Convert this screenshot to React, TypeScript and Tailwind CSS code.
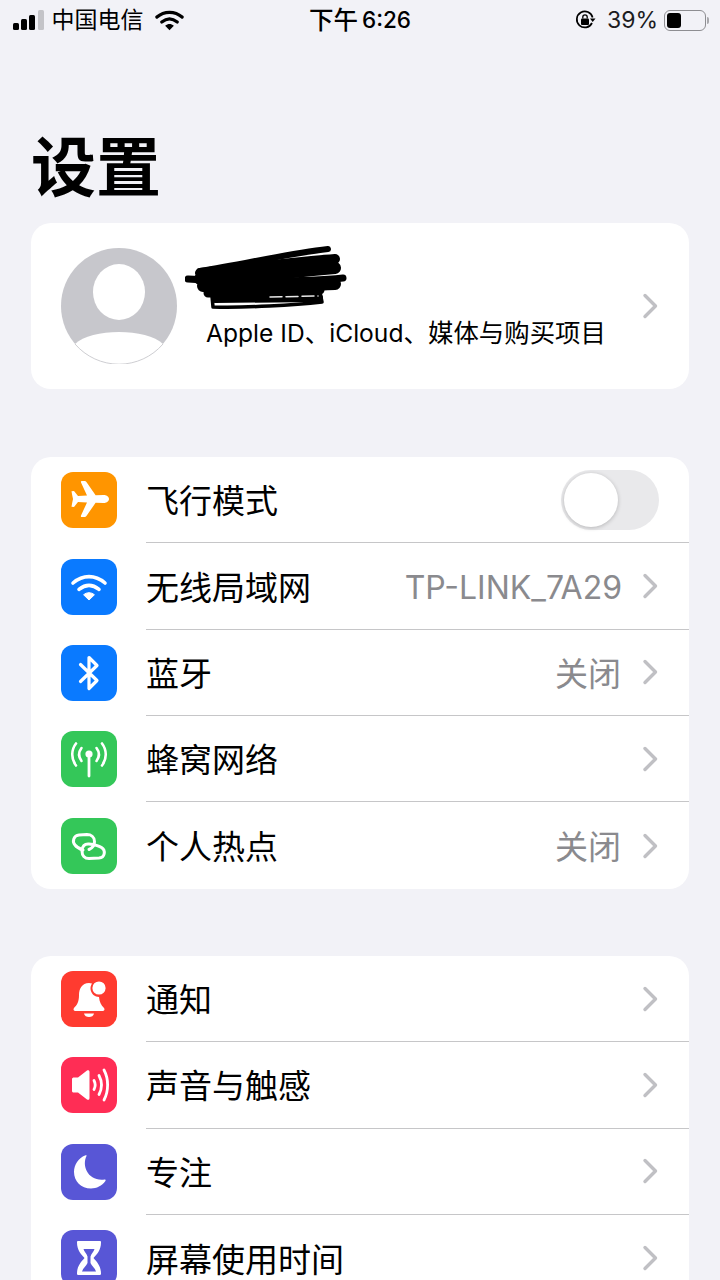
import React from "react";

const font = { fontFamily: '"Inter","Noto Sans CJK SC",sans-serif' };

function Chevron() {
  return (
    <svg width="16" height="26" viewBox="0 0 16 26" fill="none" className="shrink-0">
      <path d="M3 2.5 L13.5 13 L3 23.5" stroke="#c0c0c4" strokeWidth="3.4" strokeLinecap="round" strokeLinejoin="round" />
    </svg>
  );
}

function Plane() {
  return (
    <svg viewBox="0 0 56 56" className="w-14 h-14">
      <path fill="#fff" transform="translate(0 -1)" d="M10.5 20.2 L13 20 L17 25 L26 24.6 L20 11.5 C19.6 10.4 20.2 10 21 10 L23.5 10 C24.4 10 25 10.4 25.6 11.2 L34.6 24.3 L42.5 24 C46.5 24 48 26.4 48 28 C48 29.6 46.5 32 42.5 32 L34.6 31.7 L25.6 44.8 C25 45.6 24.4 46 23.5 46 L21 46 C20.2 46 19.6 45.6 20 44.5 L26 31.4 L17 31 L13 36 L10.5 35.8 C10.8 33 11.6 30.5 12 28 C11.6 25.5 10.8 23 10.5 20.2 Z" />
    </svg>
  );
}

function WifiIcon({ color = "#fff", w = 56 }: { color?: string; w?: number }) {
  return (
    <svg viewBox="0 0 56 56" width={w} height={w}>
      <path d="M12 24 C22 15.5 34 15.5 44 24" stroke={color} strokeWidth="3.6" fill="none" strokeLinecap="round" />
      <path d="M18 30.4 C24.5 25.2 31.5 25.2 38 30.4" stroke={color} strokeWidth="3.6" fill="none" strokeLinecap="round" />
      <path d="M22.6 35.8 C26 33 30 33 33.4 35.8 L28 41 Z" fill={color} stroke={color} strokeWidth="1" strokeLinejoin="round" />
    </svg>
  );
}

function Bluetooth() {
  return (
    <svg viewBox="0 0 56 56" className="w-14 h-14">
      <path d="M19.5 19.5 L36 35.5 L28 43.5 L28 12.5 L36 20.5 L19.5 36.5" stroke="#fff" strokeWidth="3.2" fill="none" strokeLinecap="round" strokeLinejoin="round" />
    </svg>
  );
}

function Antenna() {
  return (
    <svg viewBox="0 0 56 56" className="w-14 h-14">
      <circle cx="28" cy="23" r="3.6" fill="#fff" />
      <path d="M28 24 L28 45" stroke="#fff" strokeWidth="2.8" strokeLinecap="round" />
      <g stroke="#fff" strokeWidth="2.6" fill="none" strokeLinecap="round">
        <path d="M20.5 17 C17.5 21 17.5 26 20.5 30" />
        <path d="M35.5 17 C38.5 21 38.5 26 35.5 30" />
        <path d="M15 12.5 C10 19 10 28 15 34.5" />
        <path d="M41 12.5 C46 19 46 28 41 34.5" />
      </g>
    </svg>
  );
}

function Hotspot() {
  return (
    <svg viewBox="0 0 56 56" className="w-14 h-14">
      <g stroke="#fff" strokeWidth="3" fill="none" strokeLinecap="round" strokeLinejoin="round">
        <path d="M21 33 C21 28.5 23.5 25.5 28 26 C33 26.5 37.5 27.5 40.5 29.5 C45 32.5 44 39.5 38 40 L28 40.5 C23.5 40.5 21 37.5 21 33 Z" />
        <path d="M28 31.5 C31.5 30 33.5 26.5 33.5 23.5 C33.5 19 30 16.5 26 16.5 L18 17 C12.5 17.5 11 23.5 14 27 C15.5 29 19 31 22 32" />
      </g>
    </svg>
  );
}

function Bell() {
  return (
    <svg viewBox="0 0 56 56" className="w-14 h-14">
      <path fill="#fff" d="M28 12 C21 12 18 18 18 24 C18 31 16 34 13 37 C12 38.5 12.5 40 14.5 40 L41.5 40 C43.5 40 44 38.5 43 37 C40 34 38.5 31 38 26 C34 26 30 23 29.5 18 C29.4 16 30 14 31 12.6 C30 12.2 29 12 28 12 Z" />
      <circle cx="38" cy="17" r="6.6" fill="#fff" />
      <path fill="#fff" d="M23 42.5 L33 42.5 C32.5 45 30.5 46 28 46 C25.5 46 23.5 45 23 42.5 Z" />
    </svg>
  );
}

function Sound() {
  return (
    <svg viewBox="0 0 56 56" className="w-14 h-14">
      <path fill="#fff" d="M11 22 C11 21 12 20.5 13 20.5 L17 20.5 L26 13.5 C27.2 12.8 28.5 13.2 28.5 15 L28.5 41 C28.5 42.8 27.2 43.2 26 42.5 L17 35.5 L13 35.5 C12 35.5 11 35 11 34 Z" />
      <g stroke="#fff" strokeWidth="2.8" fill="none" strokeLinecap="round">
        <path d="M33 23.5 C34.6 26.5 34.6 29.5 33 32.5" />
        <path d="M38 18.5 C41.2 24.5 41.2 31.5 38 37.5" />
        <path d="M43 13 C47.8 22 47.8 34 43 43" />
      </g>
    </svg>
  );
}

function Moon() {
  return (
    <svg viewBox="0 0 56 56" className="w-14 h-14">
      <path fill="#fff" d="M25.5 12 C20.5 22 27 37.5 43.5 35.5 C44.5 35.4 45 36 44.4 37 C41 41.8 35.5 44.5 30 44.5 C20 44.5 13 37 13 28 C13 20.5 18 14 24 11.6 C25 11.2 26 11.2 25.5 12 Z" />
    </svg>
  );
}

function Hourglass() {
  return (
    <svg viewBox="0 0 56 56" className="w-14 h-14">
      <path fill="#fff" d="M17 11 L39 11 C39.8 11 40 11.6 40 12.4 C40 20 36 24 32.5 28 C36 32 40 36 40 43.6 C40 44.4 39.8 45 39 45 L17 45 C16.2 45 16 44.4 16 43.6 C16 36 20 32 23.5 28 C20 24 16 20 16 12.4 C16 11.6 16.2 11 17 11 Z" />
      <path fill="#5856d6" d="M22.5 19 L33.5 19 C33 21.5 30.5 23 29.5 26.5 L29.5 33 C30.5 36 34 38 35 41.5 L21 41.5 C22 38 25.5 36 26.5 33 L26.5 26.5 C25.5 23 23 21.5 22.5 19 Z" />
    </svg>
  );
}

type RowData = { bg: string; icon: React.ReactNode; label: string; value?: string; valueClass?: string; toggle?: boolean };

function Toggle() {
  return (
    <div className="mr-[30px] h-[60px] w-[98px] rounded-full bg-[#e9e9eb] flex items-center p-[3px]">
      <div className="h-[54px] w-[54px] rounded-full bg-white shadow-[0_1px_4px_rgba(0,0,0,0.22)]" />
    </div>
  );
}

function Row({ data, last }: { data: RowData; last: boolean }) {
  return (
    <div className="flex h-[86.35px] items-center pl-[30px]">
      <div className={`flex h-14 w-14 shrink-0 items-center justify-center overflow-hidden rounded-[12px] ${data.bg}`}>
        {data.icon}
      </div>
      <div className={`ml-[29px] flex h-full min-w-0 flex-1 items-center ${last ? "" : "border-b border-[#c6c6c8]"}`}>
        <span className="flex-1 pt-[4px] text-[33px] leading-none text-black">{data.label}</span>
        {data.value && <span className={`pt-[4px] leading-none text-[#8a8a8e] ${data.valueClass ?? "mr-[20px] text-[32px]"}`}>{data.value}</span>}
        {data.toggle ? <Toggle /> : <div className="mr-[31px]"><Chevron /></div>}
      </div>
    </div>
  );
}

function Group({ rows, className = "" }: { rows: RowData[]; className?: string }) {
  return (
    <div className={`overflow-hidden rounded-[20px] bg-white ${className}`}>
      {rows.map((r, i) => (
        <Row key={r.label} data={r} last={i === rows.length - 1} />
      ))}
    </div>
  );
}

const group1: RowData[] = [
  { bg: "bg-[#ff9500]", icon: <Plane />, label: "飞行模式", toggle: true },
  { bg: "bg-[#0a7aff]", icon: <WifiIcon />, label: "无线局域网", value: "TP-LINK_7A29" },
  { bg: "bg-[#0a7aff]", icon: <Bluetooth />, label: "蓝牙", value: "关闭", valueClass: "mr-[21px] text-[33px]" },
  { bg: "bg-[#34c759]", icon: <Antenna />, label: "蜂窝网络" },
  { bg: "bg-[#34c759]", icon: <Hotspot />, label: "个人热点", value: "关闭", valueClass: "mr-[21px] text-[33px]" },
];

const group2: RowData[] = [
  { bg: "bg-[#ff3b30]", icon: <Bell />, label: "通知" },
  { bg: "bg-[#ff2d55]", icon: <Sound />, label: "声音与触感" },
  { bg: "bg-[#5856d6]", icon: <Moon />, label: "专注" },
  { bg: "bg-[#5856d6]", icon: <Hourglass />, label: "屏幕使用时间" },
];

function StatusBar() {
  return (
    <div className="relative flex h-10 items-center justify-between pl-[13px] pr-[11px] text-black">
      <div className="flex items-center">
        <div className="flex h-[20px] items-end gap-[2.2px]">
          <div className="h-[7px] w-[6px] rounded-[1.5px] bg-black" />
          <div className="h-[11px] w-[6px] rounded-[1.5px] bg-black" />
          <div className="h-[15px] w-[6px] rounded-[1.5px] bg-black" />
          <div className="h-[20px] w-[6px] rounded-[1.5px] bg-[#c4c4c8]" />
        </div>
        <span className="ml-[8px] text-[23px] leading-none">中国电信</span>
        <svg viewBox="0 0 30 22" width="29" height="22" className="ml-[11px]">
          <path d="M2 8 C9.5 1.5 20.5 1.5 28 8" stroke="#000" strokeWidth="3.4" fill="none" strokeLinecap="round" />
          <path d="M7 13 C12 9 18 9 23 13" stroke="#000" strokeWidth="3.4" fill="none" strokeLinecap="round" />
          <path d="M10.5 17 C13.5 14.6 16.5 14.6 19.5 17 L15 21.5 Z" fill="#000" />
        </svg>
      </div>
      <div className="absolute left-[309px] top-[6px] flex items-center gap-[4px] font-medium leading-[28px]">
        <span className="text-[24.5px]">下午</span>
        <span className="text-[22.5px]">6:26</span>
      </div>
      <div className="flex items-center">
        <svg viewBox="0 0 22 22" width="22" height="22">
          <path d="M18 14 A8 8 0 1 1 18.6 8.5" stroke="#000" strokeWidth="1.7" fill="none" />
          <path d="M16 9.5 L21.5 9.5 L18.7 13 Z" fill="#000" />
          <rect x="7" y="9.5" width="8" height="6.5" rx="1" fill="#000" />
          <path d="M8.8 9.5 V8 A2.2 2.2 0 0 1 13.2 8 V9.5" stroke="#000" strokeWidth="1.3" fill="none" />
        </svg>
        <span className="ml-[11px] text-[23px] leading-none text-[#1c1c1e]">39%</span>
        <div className="ml-[6px] flex h-[21px] w-[42px] items-center rounded-[6px] border-[1.5px] border-[#8e8e92] p-[2px]">
          <div className="h-full w-[14px] rounded-[3px] bg-black" />
        </div>
        <div className="ml-[1px] h-[7px] w-[2px] rounded-r-sm bg-[#a8a8ac]" />
      </div>
    </div>
  );
}

function Avatar() {
  return (
    <svg viewBox="0 0 116 116" width="116" height="116" className="shrink-0">
      <circle cx="58" cy="58" r="58" fill="#c7c7cc" />
      <ellipse cx="58" cy="44" rx="26" ry="28" fill="#fff" />
      <path d="M14 96 C30 80 86 80 102 96 A58 58 0 0 1 14 96 Z" fill="#fff" />
      <path d="M14 96 A58 58 0 0 0 102 96" fill="none" stroke="#cfcfd3" strokeWidth="1" />
    </svg>
  );
}

function Scribble() {
  return (
    <svg viewBox="0 0 164 72" width="164" height="72" className="absolute left-[154px] top-[19px]">
      <g stroke="#000" fill="none" strokeLinecap="round" strokeLinejoin="round">
        <path strokeWidth="6" d="M15 29 C60 22 100 12 143 7" />
        <path strokeWidth="10" d="M15 31 C60 26 110 20 150 17" />
        <path strokeWidth="12" d="M15 37 C60 34 110 30 150 26" />
        <path strokeWidth="7" d="M3 37 C50 40 120 40 158 36" />
        <path strokeWidth="12" d="M18 44 C60 44 110 44 150 42" />
        <path strokeWidth="9" d="M23 51 C70 51 110 50 135 48" />
        <path strokeWidth="8" d="M30 57 L134 56" />
        <path strokeWidth="3.5" d="M27 54 L28 65 C60 66 110 63 137 60 L135 50" />
        <path strokeWidth="1.5" d="M85 55 L133 54" stroke="#e8e8e8" strokeDasharray="12 4" />
      </g>
    </svg>
  );
}

export default function App() {
  return (
    <div className="h-[1280px] w-[720px] overflow-hidden bg-[#f2f2f7]" style={font}>
      <StatusBar />
      <h1 className="ml-[31px] mt-[88px] text-[65px] font-bold leading-[80px] text-black">设置</h1>
      <div className="mx-[31px] mt-[15px]">
        <div className="relative flex h-[166px] items-center rounded-[20px] bg-white pl-[30px] pr-[31px]">
          <Avatar />
          <Scribble />
          <div className="ml-[29px] flex-1 self-start pt-[95px] text-[24.6px] leading-[30px] text-black">
            Apple ID、iCloud、<span className="text-[25.4px]">媒体与购买项目</span>
          </div>
          <Chevron />
        </div>
        <Group rows={group1} className="mt-[68px]" />
        <Group rows={group2} className="mt-[67.25px]" />
      </div>
    </div>
  );
}
